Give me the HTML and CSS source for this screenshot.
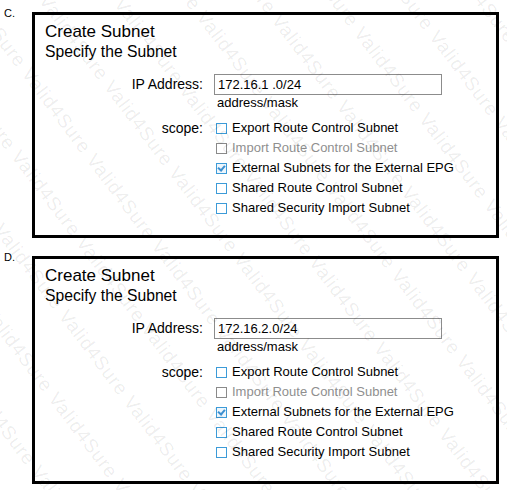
FILE: index.html
```html
<!DOCTYPE html>
<html lang="en">
<head>
  <meta charset="UTF-8" />
  <title>Create Subnet</title>
  <link rel="stylesheet" href="styles.css">
</head>
<body>

  <!-- OPTION C -->
  <div class="option">
    <span class="letter">C.</span>
    <div class="panel">
      <h1>Create Subnet</h1>
      <h2>Specify the Subnet</h2>
      <div class="form">
        <label class="label ip-label">IP Address:</label>
        <div class="field">
          <div class="input">172.16.1 .0/24</div>
          <div class="hint">address/mask</div>
        </div>
        <label class="label">scope:</label>
        <ul class="scopes">
          <li><span class="box"></span>Export Route Control Subnet</li>
          <li class="disabled"><span class="box"></span>Import Route Control Subnet</li>
          <li><span class="box checked"></span>External Subnets for the External EPG</li>
          <li><span class="box"></span>Shared Route Control Subnet</li>
          <li><span class="box"></span>Shared Security Import Subnet</li>
        </ul>
      </div>
    </div>
  </div>

  <!-- OPTION D -->
  <div class="option option-d">
    <span class="letter">D.</span>
    <div class="panel">
      <h1>Create Subnet</h1>
      <h2>Specify the Subnet</h2>
      <div class="form">
        <label class="label ip-label">IP Address:</label>
        <div class="field">
          <div class="input">172.16.2.0/24</div>
          <div class="hint">address/mask</div>
        </div>
        <label class="label">scope:</label>
        <ul class="scopes">
          <li><span class="box"></span>Export Route Control Subnet</li>
          <li class="disabled"><span class="box"></span>Import Route Control Subnet</li>
          <li><span class="box checked"></span>External Subnets for the External EPG</li>
          <li><span class="box"></span>Shared Route Control Subnet</li>
          <li><span class="box"></span>Shared Security Import Subnet</li>
        </ul>
      </div>
    </div>
  </div>

  <!-- WATERMARK -->
  <div class="watermark"><div id="wmInner" class="watermark-inner"></div></div>

  <script>
    const inner = document.getElementById("wmInner");
    for (let i = 0; i < 24; i++) {
      const line = document.createElement("div");
      line.className = "wm-line";
      line.textContent = "Valid4Sure ".repeat(20);
      if (i % 2) line.style.marginLeft = "-48px";
      inner.appendChild(line);
    }
  </script>

</body>
</html>
```

FILE: styles.css
```css
body {
  margin: 0;
  font-family: "Liberation Sans", Arial, sans-serif;
  color: #000;
  background: #fff;
  position: relative;
  width: 507px;
  height: 490px;
  overflow: hidden;
}
.option {
  display: flex;
  padding: 12px 0 0 4px;
}
.option-d {
  padding-top: 18px;
}
.letter {
  width: 28px;
  font-size: 11px;
  line-height: 11px;
  margin-top: -4px;
}
.panel {
  width: 451px;
  border: 3px solid #000;
  padding: 7px 0 17px 10px;
}
.option-d .panel {
  padding-bottom: 19px;
}
h1 {
  margin: 0;
  font-size: 17px;
  font-weight: normal;
  line-height: 20px;
}
h2 {
  margin: 0;
  font-size: 15.7px;
  font-weight: normal;
  line-height: 19px;
}
.form {
  display: grid;
  grid-template-columns: 158px 1fr;
  column-gap: 11px;
  margin-top: 13px;
  font-size: 13px;
}
.label {
  text-align: right;
  line-height: 20px;
  font-size: 14px;
}
.ip-label {
  line-height: 21px;
}
.input {
  width: 220px;
  height: 19px;
  border: 1px solid #8c8c8c;
  padding: 0 3px;
  line-height: 19px;
  font-size: 13px;
}
.hint {
  padding-left: 3px;
  line-height: 16px;
  margin-bottom: 7px;
}
.scopes {
  list-style: none;
  margin: 0;
  padding: 0 0 0 2px;
}
.scopes li {
  display: flex;
  align-items: center;
  line-height: 20px;
  height: 20px;
}
.box {
  width: 9px;
  height: 9px;
  border: 1px solid #3c9bd8;
  margin-right: 5px;
  position: relative;
  background: #fff;
}
.disabled {
  color: #8f8f8f;
}
.disabled .box {
  border-color: #8a8a8a;
}
.box.checked {
  background: #eef6fc;
}
.box.checked::after {
  content: "";
  position: absolute;
  left: 2px;
  top: 0px;
  width: 3px;
  height: 5px;
  border: solid #3c8fd0;
  border-width: 0 2px 2px 0;
  transform: rotate(40deg);
}
.watermark {
  position: absolute;
  inset: 0;
  overflow: hidden;
  pointer-events: none;
}
.watermark-inner {
  position: absolute;
  left: -400px;
  top: -500px;
  width: 1400px;
  transform: rotate(53deg);
  transform-origin: 700px 700px;
}
.wm-line {
  white-space: nowrap;
  font-size: 19px;
  line-height: 58px;
  color: rgba(0, 0, 0, 0.08);
  letter-spacing: 1px;
}
```
